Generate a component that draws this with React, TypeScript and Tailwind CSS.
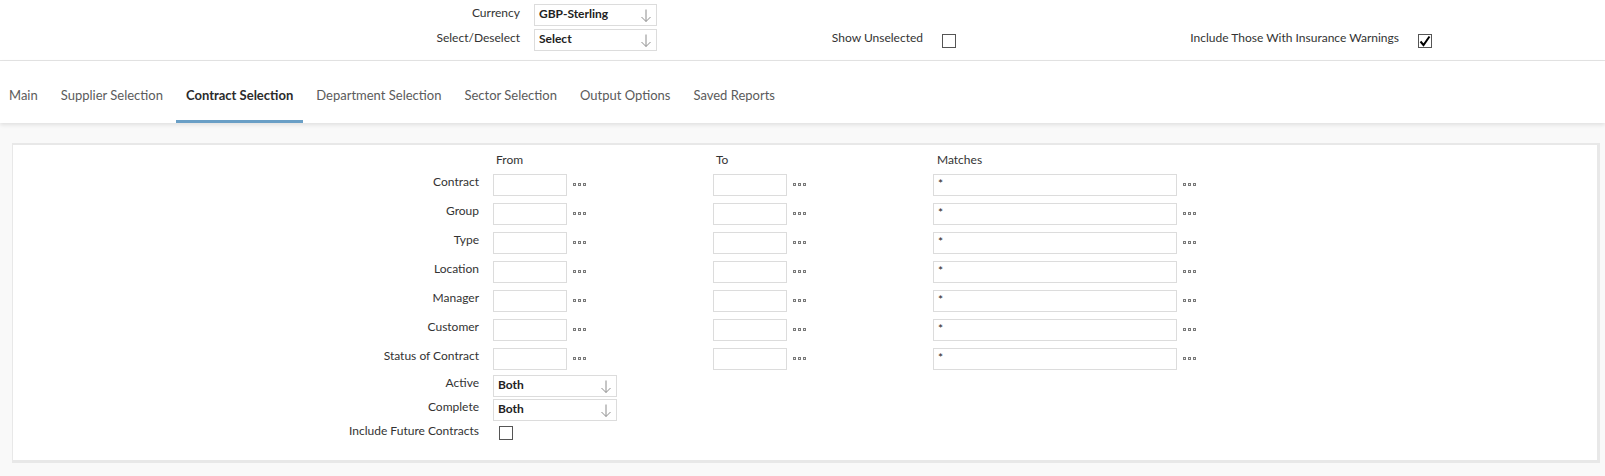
import React from 'react'

const tabs = ['Main', 'Supplier Selection', 'Contract Selection', 'Department Selection', 'Sector Selection', 'Output Options', 'Saved Reports']

const rangeRows = ['Contract', 'Group', 'Type', 'Location', 'Manager', 'Customer', 'Status of Contract']

const Dots = () => (
    <svg width="14" height="4" viewBox="0 0 14 4" className="shrink-0">
        {[0, 5, 10].map((x) => (
            <rect key={x} x={x + 0.5} y={0.5} width="2" height="2" fill="#f2f2f2" stroke="#7a7a7a" strokeWidth="1" />
        ))}
    </svg>
)

const DownArrow = () => (
    <svg width="10" height="13" viewBox="0 0 10 13" fill="none" stroke="#8c8c8c" strokeWidth="1" className="shrink-0">
        <path d="M5 0.5V12.5M0.5 8L5 12.5L9.5 8" />
    </svg>
)

const Select = ({ value, width }: { value: string; width: string }) => (
    <div className={`${width} flex h-[22px] items-center justify-between border border-[#dcdcdc] bg-white pl-[4px] pr-[5px]`}>
        <span className="pb-[2px] text-[12px] font-bold leading-[16px] text-[#222]">{value}</span>
        <DownArrow />
    </div>
)

const Checkbox = ({ checked = false }: { checked?: boolean }) => (
    <div className="flex h-[14px] w-[14px] shrink-0 items-center justify-center border border-[#555] bg-white">
        {checked && (
            <svg width="12" height="12" viewBox="0 0 12 12" fill="none" stroke="#000" strokeWidth="2">
                <path d="M1.5 6.5L4.5 10L10.5 1.5" />
            </svg>
        )}
    </div>
)

const TextBox = ({ value = '', width }: { value?: string; width: string }) => (
    <div className={`${width} h-[22px] border border-[#dcdcdc] bg-white px-[4px] pt-[1px] text-[12px] leading-[16px] text-[#222]`}>
        {value}
    </div>
)

export default function App() {
    return (
        <div className="min-h-[476px] w-[1605px] bg-[#f9f9f9] font-[Lato,sans-serif] text-[12px] text-[#333]">
            {/* report options header */}
            <div className="h-[61px] border-b border-[#e4e4e4] bg-white pt-[4px]">
                <div className="flex h-[22px] items-start">
                    <div className="w-[520px] pt-[1px] text-right leading-[16px]">Currency</div>
                    <div className="ml-[14px]">
                        <Select value="GBP-Sterling" width="w-[123px]" />
                    </div>
                </div>
                <div className="mt-[3px] flex h-[22px] items-start">
                    <div className="w-[520px] pt-[1px] text-right leading-[16px]">Select/Deselect</div>
                    <div className="ml-[14px]">
                        <Select value="Select" width="w-[123px]" />
                    </div>
                    <div className="w-[266px] pt-[1px] text-right leading-[16px]">Show Unselected</div>
                    <div className="ml-[19px] pt-[5px]">
                        <Checkbox />
                    </div>
                    <div className="w-[443px] pt-[1px] text-right leading-[16px]">Include Those With Insurance Warnings</div>
                    <div className="ml-[19px] pt-[5px]">
                        <Checkbox checked />
                    </div>
                </div>
            </div>

            {/* tabs */}
            <div className="relative flex h-[62px] bg-white shadow-[0_2px_4px_rgba(0,0,0,0.10)]">
                <div className="-ml-[1px] flex gap-[3px]">
                    {tabs.map((tab) => {
                        const active = tab === 'Contract Selection'
                        return (
                            <div
                                key={tab}
                                className={
                                    active
                                        ? 'h-[62px] border-b-[3px] border-[#6a9fc6] px-[10px] pt-[25px] text-[13px] font-bold leading-[18px] text-[#2b2b2b]'
                                        : 'h-[62px] border-b-[3px] border-transparent px-[10px] pt-[25px] text-[13px] leading-[18px] text-[#5b5b5b]'
                                }
                            >
                                {tab}
                            </div>
                        )
                    })}
                </div>
            </div>

            {/* contract selection panel */}
            <div className="px-[5px] pb-[13px] pl-[12px] pt-[20px]">
                <div className="border-b-[3px] border-l border-r-[3px] border-t-2 border-[#e8e8e8] bg-white pb-[20px] pl-px pt-[7px]">
                    <div className="flex leading-[15px]">
                        <div className="w-[465px]" />
                        <div className="ml-[14px] w-[220px] pl-[3px]">From</div>
                        <div className="w-[220px] pl-[3px]">To</div>
                        <div className="pl-[4px]">Matches</div>
                    </div>

                    <div className="mt-[7px] flex flex-col gap-[7px]">
                        {rangeRows.map((row) => (
                            <div key={row} className="flex h-[22px] items-start">
                                <div className="w-[465px] text-right leading-[16px]">{row}</div>
                                <div className="ml-[14px] flex w-[220px] items-center gap-[6px]">
                                    <TextBox width="w-[74px]" />
                                    <Dots />
                                </div>
                                <div className="flex w-[220px] items-center gap-[6px]">
                                    <TextBox width="w-[74px]" />
                                    <Dots />
                                </div>
                                <div className="flex items-center gap-[6px]">
                                    <TextBox value="*" width="w-[244px]" />
                                    <Dots />
                                </div>
                            </div>
                        ))}
                    </div>

                    <div className="mt-[5px] flex h-[22px] items-start">
                        <div className="w-[465px] text-right leading-[16px]">Active</div>
                        <div className="ml-[14px]">
                            <Select value="Both" width="w-[124px]" />
                        </div>
                    </div>
                    <div className="mt-[2px] flex h-[22px] items-start">
                        <div className="w-[465px] text-right leading-[16px]">Complete</div>
                        <div className="ml-[14px]">
                            <Select value="Both" width="w-[124px]" />
                        </div>
                    </div>
                    <div className="mt-[2px] flex items-start">
                        <div className="w-[465px] text-right leading-[16px]">Include Future Contracts</div>
                        <div className="ml-[20px] pt-[3px]">
                            <Checkbox />
                        </div>
                    </div>
                </div>
            </div>
        </div>
    )
}
